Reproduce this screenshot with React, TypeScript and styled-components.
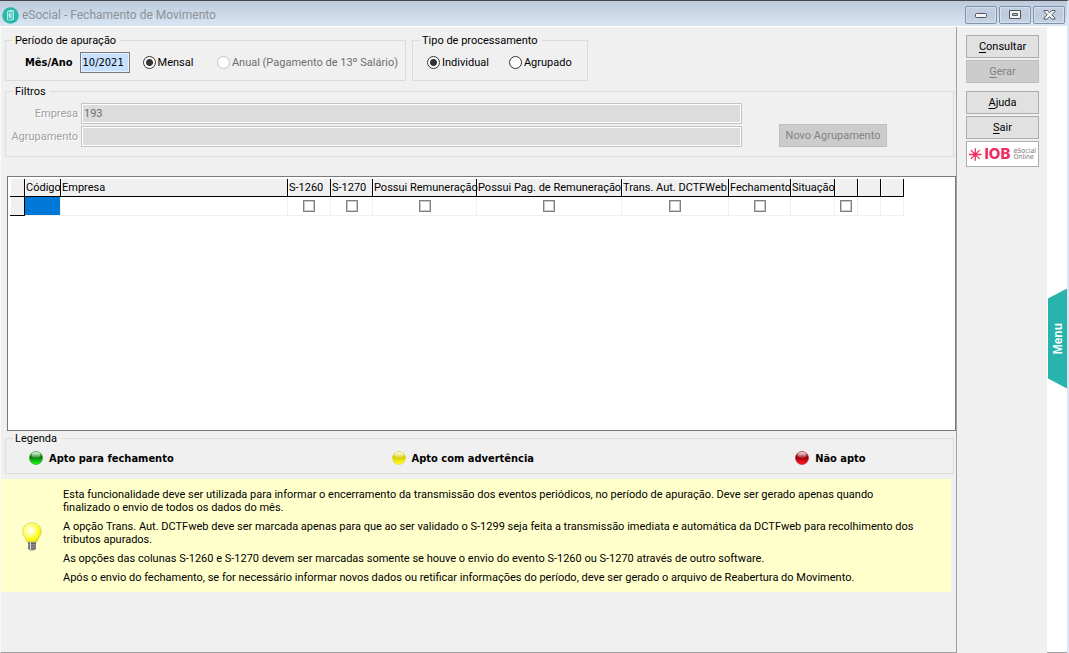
import React, { useState } from "react";
import styled, { createGlobalStyle, css } from "styled-components";

const uiFont = `Roboto, "Noto Sans", sans-serif`;
const boldFont = `"DejaVu Sans Condensed", "DejaVu Sans", sans-serif`;

const GlobalStyle = createGlobalStyle`
  *, *::before, *::after { box-sizing: border-box; }
  body {
    margin: 0;
    background: #f0f0f0;
    color: #000;
    font: 11px/13px ${uiFont};
  }
  button, input { font: inherit; color: inherit; margin: 0; }
`;

const Window = styled.div`
  display: flex;
  flex-direction: column;
  min-height: 100vh;
  border-top: 1px solid #46464c;
  border-right: 2px solid #dbe4f2;
`;

const TitleBar = styled.header`
  display: flex;
  align-items: center;
  height: 26px;
  gap: 3px;
  padding: 3px 2px 0;
  background: linear-gradient(#bccadb, #d9e6f4);
  border-bottom: 1px solid #fff;
`;

const Title = styled.h1`
  flex: 1;
  margin: 0;
  font: 12px/16px ${uiFont};
  color: #8d9298;
`;

const WindowControls = styled.div`
  display: flex;
  gap: 2px;
`;

const ControlButton = styled.button`
  display: flex;
  align-items: center;
  justify-content: center;
  width: 32px;
  height: 18px;
  padding: 0;
  border: 1px solid #8090ae;
  border-radius: 2px;
  background: linear-gradient(#c3d0e0, #bccbdc 50%, #c6d4e4);
  box-shadow: inset 0 0 0 1px #d5e0ed;
`;

const Body = styled.div`
  flex: 1;
  display: flex;
`;

const Main = styled.main`
  flex: 1;
  min-width: 0;
  display: flex;
  flex-direction: column;
  padding: 7px 0 60px;
  border-left: 1px solid #fafafa;
  border-right: 1px solid #a0a0a0;
  border-bottom: 1px solid #a0a0a0;
`;

const GroupRow = styled.div`
  display: flex;
  gap: 6px;
  margin: 0 2px 4px 4px;
`;

const Group = styled.fieldset<{ $width?: number }>`
  min-width: 0;
  ${(p) => p.$width && css`width: ${p.$width}px;`}
  margin: 0;
  padding: 0 7px;
  border: 1px solid #dcdcdc;
`;

const Legend = styled.legend`
  padding: 0 4px 0 2px;
  line-height: 13px;
`;

const FieldLine = styled.div`
  display: flex;
  align-items: center;
  height: 33px;
  padding: 0 0 3px 5px;
`;

const RadioLine = styled(FieldLine)`
  padding-left: 7px;
  gap: 20px;
`;

const MonthLabel = styled.label`
  display: flex;
  align-items: center;
  gap: 7px;
  margin: 0 13px 0 7px;
  font-family: ${boldFont};
  font-weight: bold;
`;

const MonthInput = styled.input`
  width: 50px;
  height: 21px;
  padding: 0 2px;
  border: 1px solid #7a7a7a;
  outline: 0;
  background: #c7e0ff;
  box-shadow: inset 0 0 0 1px #e6f1ff;
  font-weight: normal;
`;

const RadioLabel = styled.label<{ $disabled?: boolean }>`
  display: flex;
  align-items: center;
  gap: 2px;
  white-space: nowrap;
  color: ${(p) => (p.$disabled ? "#6d6d6d" : "#000")};
`;

const Radio = styled.input.attrs({ type: "radio" })`
  appearance: none;
  flex: none;
  width: 13px;
  height: 13px;
  border: 1px solid #333;
  border-radius: 50%;
  background: #fff;
  &:checked { background: radial-gradient(circle, #333 3px, #fff 4px); }
  &:disabled { border-color: #c3c3c3; }
`;

const Spacer = styled.span`
  width: 27px;
`;

const Filters = styled(Group)`
  margin: 0 2px 19px 4px;
`;

const FilterLayout = styled.div`
  display: flex;
  align-items: flex-end;
  gap: 37px;
  padding: 5px 59px 9px 0;
`;

const FilterGrid = styled.div`
  flex: 1;
  display: grid;
  grid-template-columns: 65px 1fr;
  gap: 2px 3px;
  align-items: center;
`;

const FilterLabel = styled.label`
  justify-self: end;
  color: #a0a0a0;
  text-shadow: 1px 1px #fff;
  white-space: nowrap;
`;

const FilterInput = styled.input`
  min-width: 0;
  height: 21px;
  padding: 0 2px;
  border: 1px solid #c4c4c4;
  background: #dcdcdc;
  box-shadow: inset 0 0 0 1px #fff;
  color: #6d6d6d;
`;

const Button = styled.button`
  height: 23px;
  padding: 0;
  border: 1px solid #adadad;
  background: #e1e1e1;
  white-space: nowrap;
  u { text-underline-offset: 2px; }
  &:disabled {
    border-color: #bfbfbf;
    background: #ccc;
    color: #838383;
  }
`;

const GroupButton = styled(Button)`
  width: 108px;
`;

const GridBox = styled.section`
  flex: 1;
  margin: 0 0 1px 6px;
  padding: 2px;
  border: 1px solid #7a7a7a;
  background: #fff;
`;

const Table = styled.table`
  table-layout: fixed;
  width: 894px;
  border-spacing: 0;
`;

const HeadCell = styled.th`
  height: 18px;
  padding: 0 0 0 1px;
  border-right: 1px solid #000;
  border-bottom: 1px solid #000;
  background: #f0f0f0;
  box-shadow: inset 1px 0 #fff;
  font-weight: normal;
  text-align: left;
  white-space: nowrap;
`;

const Cell = styled.td<{ $selected?: boolean }>`
  height: 19px;
  padding: 0;
  border-right: 1px solid #f0f0f0;
  border-bottom: 1px solid #f0f0f0;
  background: ${(p) => (p.$selected ? "#0078d7" : "#fff")};
  text-align: center;
`;

const CheckBox = styled.input.attrs({ type: "checkbox" })`
  appearance: none;
  display: block;
  width: 12px;
  height: 12px;
  margin: 0 auto;
  border: 1px solid #808080;
  background: #fff;
  box-shadow: inset 0 0 0 1px #c8c8c8;
  &:checked { background: #555; }
`;

const LegendGroup = styled(Group)`
  margin: 0 2px 5px 4px;
`;

const LegendItems = styled.ul`
  display: grid;
  grid-template-columns: 363fr 404fr 151fr;
  margin: 0;
  padding: 6px 0 8px 16px;
  list-style: none;
  font-family: ${boldFont};
  font-weight: bold;
`;

const LegendItem = styled.li`
  display: flex;
  align-items: center;
  gap: 6px;
  height: 14px;
`;

const Info = styled.aside`
  display: grid;
  grid-template-columns: 62px 1fr;
  align-items: center;
  margin-right: 5px;
  padding: 9px 0 8px;
  background: #ffffcc;
  svg { justify-self: center; }
`;

const InfoText = styled.div`
  display: grid;
  gap: 6px;
`;

const Paragraph = styled.p`
  margin: 0;
`;

const Side = styled.nav`
  display: flex;
  flex-direction: column;
  gap: 2px;
  width: 90px;
  padding: 8px 8px 0 9px;
`;

const SideGroup = styled.div`
  display: grid;
  gap: 2px;
  margin-bottom: 6px;
`;

const LogoButton = styled.button`
  display: flex;
  align-items: center;
  gap: 3px;
  height: 26px;
  padding: 0 2px;
  border: 1px solid #adadad;
  background: #fff;
`;

const LogoName = styled.span`
  color: #ee2d63;
  font: 800 15px/16px Inter, "Open Sans", sans-serif;
`;

const LogoCaption = styled.span`
  color: #777;
  font: 7px/6px "DejaVu Sans Condensed", sans-serif;
  text-align: left;
`;

const Rail = styled.div`
  display: flex;
  align-items: center;
  width: 20px;
  padding: 0 0 2px 1px;
  background: #fff;
  border-bottom: 1px solid #a0a0a0;
`;

const MenuTab = styled.button`
  display: flex;
  align-items: center;
  justify-content: center;
  width: 100%;
  height: 100px;
  padding: 0;
  border: 0;
  background: #28b4ac;
  color: #fff;
  clip-path: polygon(0 10px, 100% 0, 100% 100%, 0 90px);
`;

const MenuText = styled.span`
  writing-mode: vertical-rl;
  transform: rotate(180deg);
  font: bold 12px/14px "Liberation Sans", Arial, sans-serif;
`;

const AppIcon = () => (
  <svg width="17" height="17" viewBox="0 0 17 17" aria-hidden="true">
    <circle cx="8.5" cy="8.5" r="8.3" fill="#28b9ae" />
    <path d="M5.5 4.500h1.500v-1h4.500v9h-1.500M5.500 4.500h4.500v8.500h-4.500z" fill="none" stroke="#c4efeb" strokeWidth=".9" />
    <path d="M9 6.800H6.900v1.600h1.700v1.800H6.600M7.800 6v5" fill="none" stroke="#e2f8f6" strokeWidth=".8" />
  </svg>
);

const MinimizeIcon = () => (
  <svg width="12" height="6" viewBox="0 0 12 6" aria-hidden="true">
    <rect x=".5" y="1.5" width="11" height="4" rx="1" fill="#f4f4f4" stroke="#50545e" />
  </svg>
);

const RestoreIcon = () => (
  <svg width="12" height="10" viewBox="0 0 12 10" aria-hidden="true">
    <path d="M.5.5h11v8H.5zM3.500 3.500h5v2h-5z" fill="#f4f4f4" fillRule="evenodd" stroke="#50545e" />
  </svg>
);

const CloseIcon = () => (
  <svg width="13" height="10" viewBox="0 0 13 10" aria-hidden="true">
    <path
      d="M1 .5h3.200l2.300 2.300L8.800.5H12v1L8.800 4.800 12 8.100v1H8.800L6.500 6.800 4.200 9.100H1v-1l3.200-3.300L1 1.500z"
      fill="#f4f4f4"
      stroke="#50545e"
    />
  </svg>
);

type BallProps = { id: string; dark: string; mid: string; bright: string };

const Ball = ({ id, dark, mid, bright }: BallProps) => (
  <svg width="14" height="14" viewBox="0 0 14 14" aria-hidden="true">
    <defs>
      <linearGradient id={id} x1="0" y1="0" x2="0" y2="1">
        <stop offset="0" stopColor={mid} />
        <stop offset=".45" stopColor={dark} />
        <stop offset=".9" stopColor={bright} />
      </linearGradient>
      <linearGradient id={`${id}-shine`} x1="0" y1="0" x2="0" y2="1">
        <stop offset="0" stopColor="#fff" stopOpacity=".85" />
        <stop offset="1" stopColor="#fff" stopOpacity=".1" />
      </linearGradient>
    </defs>
    <circle cx="7" cy="7" r="6.5" fill={`url(#${id})`} stroke={dark} strokeOpacity=".6" strokeWidth=".8" />
    <ellipse cx="7" cy="4" rx="4.500" ry="3" fill={`url(#${id}-shine)`} />
  </svg>
);

const Bulb = () => (
  <svg width="20" height="29" viewBox="0 0 20 29" aria-hidden="true">
    <defs>
      <radialGradient id="bulb" cx=".42" cy=".4" r=".62">
        <stop offset="0" stopColor="#fff" />
        <stop offset=".35" stopColor="#ffffb0" />
        <stop offset=".75" stopColor="#ffff10" />
        <stop offset="1" stopColor="#e4e000" />
      </radialGradient>
    </defs>
    <path
      d="M10 .7c5.400 0 9.300 3.900 9.300 8.900 0 4.400-3.300 5.800-4.300 10.400H5C4 15.400.7 14 .7 9.600.7 4.600 4.600.7 10 .7z"
      fill="url(#bulb)"
      stroke="#cfcf9a"
      strokeWidth=".8"
    />
    <path d="M6 20h8v7l-2 1.500H8L6 27z" fill="#8c8c8c" />
    <path d="M6 21.500h8M6 24h8M6 26.500h8" stroke="#666" />
    <path d="M8.500 20v8" stroke="#d4d4d4" />
  </svg>
);

const Burst = () => (
  <svg width="13" height="13" viewBox="0 0 12 12" aria-hidden="true">
    <path d="M6 0v12M0 6h12M1.800 1.800l8.400 8.400M10.200 1.800l-8.400 8.400" stroke="#ee2d63" strokeWidth="1.200" />
    <circle cx="6" cy="6" r="2" fill="#ee2d63" />
  </svg>
);

const columns = [
  { title: "", width: 15 },
  { title: "Código", width: 36 },
  { title: "Empresa", width: 227 },
  { title: "S-1260", width: 43, check: true },
  { title: "S-1270", width: 42, check: true },
  { title: "Possui Remuneração", width: 104, check: true },
  { title: "Possui Pag. de Remuneração", width: 145, check: true },
  { title: "Trans. Aut. DCTFWeb", width: 107, check: true },
  { title: "Fechamento", width: 62, check: true },
  { title: "Situação", width: 44 },
  { title: "", width: 23, check: true },
  { title: "", width: 23 },
  { title: "", width: 23 },
];

export default function App() {
  const [month, setMonth] = useState("10/2021");
  const [mode, setMode] = useState("individual");

  return (
    <Window>
      <GlobalStyle />
      <TitleBar>
        <AppIcon />
        <Title>eSocial - Fechamento de Movimento</Title>
        <WindowControls>
          <ControlButton aria-label="Minimizar"><MinimizeIcon /></ControlButton>
          <ControlButton aria-label="Restaurar"><RestoreIcon /></ControlButton>
          <ControlButton aria-label="Fechar"><CloseIcon /></ControlButton>
        </WindowControls>
      </TitleBar>
      <Body>
        <Main>
          <GroupRow>
            <Group $width={401}>
              <Legend>Período de apuração</Legend>
              <FieldLine>
                <MonthLabel>
                  Mês/Ano
                  <MonthInput value={month} onChange={(e) => setMonth(e.target.value)} />
                </MonthLabel>
                <RadioLabel>
                  <Radio name="period" defaultChecked />
                  Mensal
                </RadioLabel>
                <Spacer />
                <RadioLabel $disabled>
                  <Radio name="period" disabled />
                  Anual (Pagamento de 13º Salário)
                </RadioLabel>
              </FieldLine>
            </Group>
            <Group $width={176}>
              <Legend>Tipo de processamento</Legend>
              <RadioLine>
                <RadioLabel>
                  <Radio name="mode" checked={mode === "individual"} onChange={() => setMode("individual")} />
                  Individual
                </RadioLabel>
                <RadioLabel>
                  <Radio name="mode" checked={mode === "agrupado"} onChange={() => setMode("agrupado")} />
                  Agrupado
                </RadioLabel>
              </RadioLine>
            </Group>
          </GroupRow>

          <Filters>
            <Legend>Filtros</Legend>
            <FilterLayout>
              <FilterGrid>
                <FilterLabel htmlFor="company">Empresa</FilterLabel>
                <FilterInput id="company" defaultValue="193" disabled />
                <FilterLabel htmlFor="grouping">Agrupamento</FilterLabel>
                <FilterInput id="grouping" disabled />
              </FilterGrid>
              <GroupButton disabled>Novo Agrupamento</GroupButton>
            </FilterLayout>
          </Filters>

          <GridBox>
            <Table>
              <colgroup>
                {columns.map((c, i) => <col key={i} width={c.width} />)}
              </colgroup>
              <thead>
                <tr>{columns.map((c, i) => <HeadCell key={i}>{c.title}</HeadCell>)}</tr>
              </thead>
              <tbody>
                <tr>
                  {columns.map((c, i) =>
                    i === 0 ? (
                      <HeadCell as="td" key={i} />
                    ) : (
                      <Cell key={i} $selected={i === 1}>
                        {c.check && <CheckBox aria-label={c.title || "Selecionar"} />}
                      </Cell>
                    )
                  )}
                </tr>
              </tbody>
            </Table>
          </GridBox>

          <LegendGroup>
            <Legend>Legenda</Legend>
            <LegendItems>
              <LegendItem><Ball id="green" dark="#0a7a0a" mid="#4caf4c" bright="#14f014" />Apto para fechamento</LegendItem>
              <LegendItem><Ball id="yellow" dark="#d8cc00" mid="#e8e070" bright="#fff820" />Apto com advertência</LegendItem>
              <LegendItem><Ball id="red" dark="#96000c" mid="#b04048" bright="#ff1420" />Não apto</LegendItem>
            </LegendItems>
          </LegendGroup>

          <Info>
            <Bulb />
            <InfoText>
              <Paragraph>
                Esta funcionalidade deve ser utilizada para informar o encerramento da transmissão dos eventos periódicos, no período de apuração. Deve ser gerado apenas quando
                <br />
                finalizado o envio de todos os dados do mês.
              </Paragraph>
              <Paragraph>
                A opção Trans. Aut. DCTFweb deve ser marcada apenas para que ao ser validado o S-1299 seja feita a transmissão imediata e automática da DCTFweb para recolhimento dos
                <br />
                tributos apurados.
              </Paragraph>
              <Paragraph>
                As opções das colunas S-1260 e S-1270 devem ser marcadas somente se houve o envio do evento S-1260 ou S-1270 através de outro software.
              </Paragraph>
              <Paragraph>
                Após o envio do fechamento, se for necessário informar novos dados ou retificar informações do período, deve ser gerado o arquivo de Reabertura do Movimento.
              </Paragraph>
            </InfoText>
          </Info>
        </Main>

        <Side>
          <SideGroup>
            <Button><u>C</u>onsultar</Button>
            <Button disabled><u>G</u>erar</Button>
          </SideGroup>
          <Button><u>A</u>juda</Button>
          <Button><u>S</u>air</Button>
          <LogoButton>
            <Burst />
            <LogoName>IOB</LogoName>
            <LogoCaption>eSocial<br />Online</LogoCaption>
          </LogoButton>
        </Side>

        <Rail>
          <MenuTab><MenuText>Menu</MenuText></MenuTab>
        </Rail>
      </Body>
    </Window>
  );
}
